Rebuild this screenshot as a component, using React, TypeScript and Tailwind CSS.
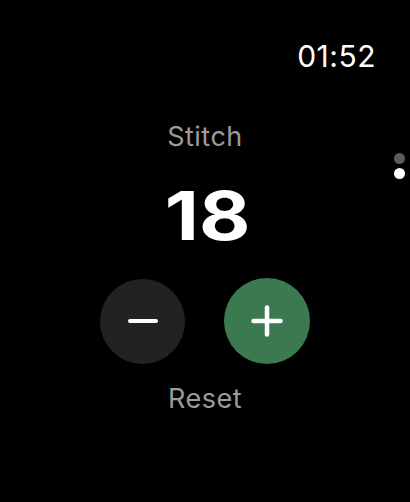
import { useState } from 'react';

export default function App() {
  const [count, setCount] = useState(18);

  return (
    <div
      className="relative flex h-[502px] w-full flex-col items-center overflow-hidden bg-black text-white"
      style={{ fontFamily: 'Inter, "Noto Sans", sans-serif' }}
    >
      {/* Status bar */}
      <div className="flex w-full justify-end pr-[34px] pt-[41px]">
        <span className="text-[30px] leading-[30px] font-normal tracking-[0.5px]">01:52</span>
      </div>

      {/* Page indicator */}
      <div className="absolute right-[5px] top-[153px] flex flex-col gap-[4px]">
        <div className="h-[11px] w-[11px] rounded-full bg-[#5c5c5c]" />
        <div className="h-[11px] w-[11px] rounded-full bg-white" />
      </div>

      <p className="mt-[52px] text-[27px] leading-[27px] text-[#9b9b9b] tracking-[0.5px]">Stitch</p>

      <p className="mt-[33px] pl-[4px] text-[67px] leading-[66px] font-bold scale-x-[1.18]">{count}</p>

      <div className="mt-[29px] flex items-center gap-[39px]">
        <button
          onClick={() => setCount(c => Math.max(0, c - 1))}
          className="flex h-[85px] w-[85px] items-center justify-center rounded-full bg-[#222224]"
        >
          <svg width="30" height="30" viewBox="0 0 30 30">
            <line x1="2" y1="15" x2="28" y2="15" stroke="white" strokeWidth="4" strokeLinecap="round" />
          </svg>
        </button>
        <button
          onClick={() => setCount(c => c + 1)}
          className="flex h-[86px] w-[86px] items-center justify-center rounded-full bg-[#3b7a51]"
        >
          <svg width="32" height="32" viewBox="0 0 32 32">
            <line x1="2.5" y1="16" x2="29.5" y2="16" stroke="white" strokeWidth="4.5" strokeLinecap="round" />
            <line x1="16" y1="2.5" x2="16" y2="29.5" stroke="white" strokeWidth="4.5" strokeLinecap="round" />
          </svg>
        </button>
      </div>

      <button
        onClick={() => setCount(0)}
        className="mt-[21px] text-[27px] leading-[27px] text-[#9b9b9b] tracking-[0.5px]"
      >
        Reset
      </button>
    </div>
  );
}
